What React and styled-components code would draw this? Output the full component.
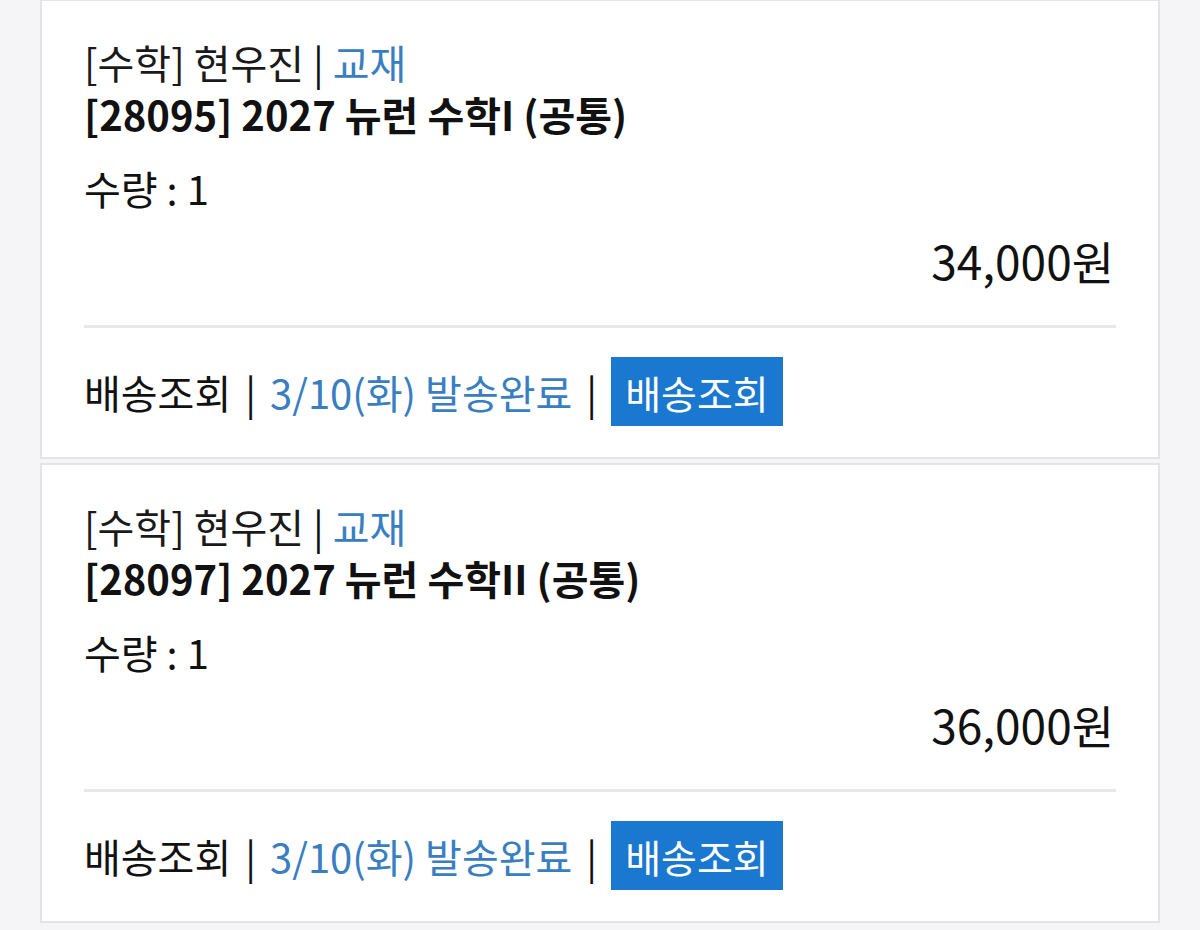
import React from "react";
import styled, { createGlobalStyle } from "styled-components";

const orders = [
  {
    id: 1,
    subject: "수학",
    teacher: "현우진",
    kind: "교재",
    code: "28095",
    title: "2027 뉴런 수학I (공통)",
    qty: 1,
    price: 34000,
    shipDate: "3/10(화)",
  },
  {
    id: 2,
    subject: "수학",
    teacher: "현우진",
    kind: "교재",
    code: "28097",
    title: "2027 뉴런 수학II (공통)",
    qty: 1,
    price: 36000,
    shipDate: "3/10(화)",
  },
];

const GlobalStyle = createGlobalStyle`
  html, body {
    margin: 0;
    padding: 0;
    background: #f5f5f7;
  }
  body {
    font-family: "Noto Sans CJK KR", "Noto Sans", sans-serif;
    color: #111;
  }
`;

const OrderList = () => (
  <List>
    {orders.map((order) => (
      <OrderCard key={order.id}>
        <MetaLine>
          [{order.subject}] {order.teacher} <Bar>|</Bar> <Blue>{order.kind}</Blue>
        </MetaLine>
        <Title>
          [{order.code}] {order.title}
        </Title>
        <Qty>수량 : {order.qty}</Qty>
        <Price>{order.price.toLocaleString("ko-KR")}원</Price>
        <Divider />
        <ShipRow>
          <span>배송조회</span>
          <Bar>|</Bar>
          <Blue>{order.shipDate} 발송완료</Blue>
          <Bar>|</Bar>
          <TrackButton type="button">배송조회</TrackButton>
        </ShipRow>
      </OrderCard>
    ))}
  </List>
);

export default function App() {
  return (
    <>
      <GlobalStyle />
      <OrderList />
    </>
  );
}

const List = styled.div`
  display: flex;
  flex-direction: column;
  gap: 4px;
  margin-top: -1px;
  padding: 0 40px 6px;
`;

const OrderCard = styled.div`
  background: #fff;
  border: 2px solid #e4e4e6;
  padding: 35px 42px 31px;
`;

const MetaLine = styled.div`
  font-size: 40px;
  line-height: 52px;
  color: #1a1a1a;
  white-space: nowrap;
`;

const Title = styled.div`
  font-size: 40px;
  line-height: 52px;
  font-weight: 700;
  color: #111;
  white-space: nowrap;
`;

const Qty = styled.div`
  margin-top: 22px;
  font-size: 40px;
  line-height: 52px;
  color: #111;
`;

const Price = styled.div`
  margin-top: 18px;
  text-align: right;
  font-size: 46px;
  line-height: 56px;
  color: #111;
  padding-right: 2px;
`;

const Divider = styled.div`
  margin-top: 37px;
  height: 3px;
  background: #e8e8ea;
`;

const ShipRow = styled.div`
  display: flex;
  align-items: center;
  gap: 14px;
  padding-top: 29px;
  font-size: 40px;
  color: #111;
  white-space: nowrap;
`;

const Blue = styled.span`
  color: #3a7ec2;
`;

const Bar = styled.span`
  color: #111;
`;

const TrackButton = styled.button`
  height: 69px;
  padding: 0 14px;
  border: none;
  border-radius: 0;
  background: #1b78d0;
  color: #fff;
  font-family: inherit;
  font-size: 39px;
  cursor: pointer;
`;
